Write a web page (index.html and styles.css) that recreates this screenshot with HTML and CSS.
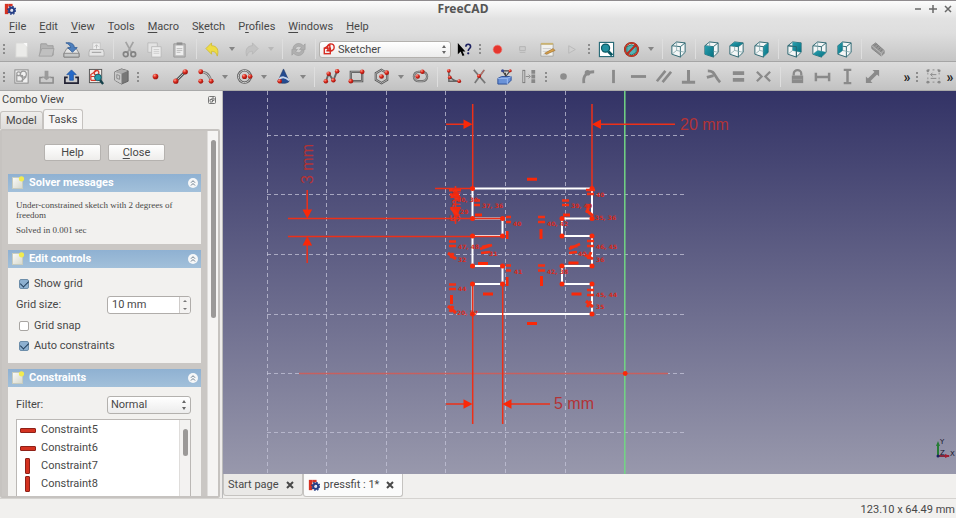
FILE: index.html
```html
<!DOCTYPE html>
<html lang="en">
<head>
<meta charset="utf-8">
<title>FreeCAD</title>
<link rel="stylesheet" href="styles.css">
</head>
<body>
<svg class="defs" aria-hidden="true">
  <defs>
    <radialGradient id="ball" cx=".35" cy=".3" r=".8"><stop offset="0" stop-color="#ff9a88"/><stop offset=".45" stop-color="#d8281c"/><stop offset="1" stop-color="#8a0c08"/></radialGradient>
    <linearGradient id="paper" x1="0" y1="0" x2="1" y2="1"><stop offset="0" stop-color="#fafaf8"/><stop offset="1" stop-color="#d6d8cc"/></linearGradient>
    <linearGradient id="teal" x1="0" y1="0" x2="1" y2="1"><stop offset="0" stop-color="#2aa0b0"/><stop offset="1" stop-color="#067080"/></linearGradient>
    <symbol id="app" viewBox="0 0 14 14"><g fill="#d63222"><rect x="1" y="1" width="4" height="12"/><rect x="5" y="1" width="5" height="3"/><rect x="5" y="6" width="3" height="3"/></g><circle cx="9" cy="8.500" r="3" fill="none" stroke="#263f86" stroke-width="2.400"/><circle cx="9" cy="8.500" r="4.600" fill="none" stroke="#263f86" stroke-width="1.600" stroke-dasharray="1.800 1.810"/><circle cx="9" cy="8.500" r="1.500" fill="#dfe6f4"/></symbol>
    <symbol id="new" viewBox="0 0 18 18"><rect x="3" y="2" width="12" height="15" fill="#ebebe9" stroke="#d6d6d4"/><path d="M11 2h4v4z" fill="#fafafa"/></symbol>
    <symbol id="open" viewBox="0 0 18 18"><path d="M3 3h6l1 2h6v10H2z" fill="#b4b4b4" stroke="#9c9c9c"/><path d="M4 8h13l-2 8H1z" fill="#c0c0c0" stroke="#a2a2a2"/></symbol>
    <symbol id="save" viewBox="0 0 18 18"><path d="M4 8h10l3 5v4H1v-4z" fill="#e4e4e4" stroke="#8b8b8b"/><path d="M1 13h16v4H1z" fill="#c6c8c8" stroke="#858585"/><path d="M3 2c5-1 9 1 9 5h3l-5 5-5-5h3c0-2-2-4-5-5z" fill="#4d7fbd" stroke="#29558f" stroke-width=".8"/></symbol>
    <symbol id="print" viewBox="0 0 18 18"><path d="M5 2h8v7H5z" fill="#eee" stroke="#c3c3c3"/><path d="M2 9h14l1 3v4H1v-4z" fill="#e4e4e4" stroke="#b0b0b0"/><path d="M9 4v4M7 6l2-2 2 2" stroke="#bbb" fill="none"/><path d="M4 12h10" stroke="#999"/></symbol>
    <symbol id="cut" viewBox="0 0 18 18"><path d="M5 1l6 11M13 1L7 12" stroke="#a2a2a2" stroke-width="1.800"/><circle cx="5" cy="14" r="2.500" fill="none" stroke="#838383" stroke-width="1.800"/><circle cx="13" cy="14" r="2.500" fill="none" stroke="#838383" stroke-width="1.800"/></symbol>
    <symbol id="copy" viewBox="0 0 18 18"><path d="M2 2h10v10H2z" fill="#e3e3e3" stroke="#bbb"/><path d="M6 6h10v11H6z" fill="#ededed" stroke="#bbb"/><path d="M8 9h6M8 11h6M8 13h6" stroke="#ccc"/></symbol>
    <symbol id="paste" viewBox="0 0 18 18"><path d="M3 3h12v14H3z" fill="#bdbdbd" stroke="#999"/><path d="M5 5h8v10H5z" fill="#eee"/><path d="M6 1.500h6V4H6z" fill="#8d8d8d"/><path d="M6 8h6M6 10h6M6 12h4" stroke="#bbb"/></symbol>
    <symbol id="undo" viewBox="0 0 18 18"><path d="M2 8l6-6v3c6 0 8 5 6 11-1-4-3-5-6-5v3z" fill="#eedc45" stroke="#cdb72c" stroke-width=".8"/></symbol>
    <symbol id="redo" viewBox="0 0 18 18"><path d="M16 8l-6-6v3c-6 0-8 5-6 11 1-4 3-5 6-5v3z" fill="#c3c3c3" stroke="#b4b4b4" stroke-width=".8"/></symbol>
    <symbol id="refresh" viewBox="0 0 18 18"><path d="M3 8c1-6 8-7 11-3l2-2v6h-6l2-2c-2-2-5-2-6 1z" fill="#b0b0b0" stroke="#989898" stroke-width=".6"/><path d="M15 10c-1 6-8 7-11 3l-2 2V9h6l-2 2c2 2 5 2 6-1z" fill="#b0b0b0" stroke="#989898" stroke-width=".6"/></symbol>
    <symbol id="sketcher" viewBox="0 0 14 14"><g fill="none" stroke="#d62a20" stroke-width="1.600"><rect x="1.500" y="6" width="7" height="6.500"/><circle cx="9" cy="5" r="4"/><path d="M2 6l6-4v7M4 9h7"/></g></symbol>
    <symbol id="help" viewBox="0 0 18 18"><path d="M3 2v12l3-3 2 5 2-1-2-4h3z" fill="#000"/><path d="M11.500 6c0-3.500 5-3.500 5 0 0 2-2.500 2-2.500 4.500" stroke="#1d2160" stroke-width="1.700" fill="none"/><circle cx="14" cy="13" r="1.200" fill="#1d2160"/></symbol>
    <symbol id="record" viewBox="0 0 18 18"><circle cx="9" cy="9" r="4.600" fill="#e6362e" stroke="#ef7770" stroke-width=".7"/></symbol>
    <symbol id="stop" viewBox="0 0 18 18"><path d="M6 6h6v4H6z" fill="#ccc" stroke="#b4b4b4"/><path d="M6 12h6" stroke="#b4b4b4"/></symbol>
    <symbol id="macro" viewBox="0 0 18 18"><path d="M2 3h13v13H2z" fill="#f1f1ee" stroke="#a8a8a4"/><path d="M2 2h13v2H2z" fill="#c9b272"/><path d="M4 8h9M4 11h8M4 14h6" stroke="#ccc"/><path d="M6 13l9-5 2 2-9 4z" fill="#d8a14a" stroke="#916326" stroke-width=".6"/></symbol>
    <symbol id="play" viewBox="0 0 18 18"><path d="M5 5l7 4-7 4z" fill="#d0d0d0" stroke="#b9b9b9"/></symbol>
    <symbol id="fit" viewBox="0 0 18 18"><rect x="1.500" y="1.500" width="15" height="15" fill="#fff" stroke="#286a77" stroke-width="1.200"/><path d="M11 11l4 4" stroke="#075561" stroke-width="3"/><circle cx="8" cy="7.500" r="4.300" fill="#23909f" stroke="#0b5965" stroke-width="1.300"/></symbol>
    <symbol id="nodraw" viewBox="0 0 18 18"><path d="M4 6l5-2 5 2v6l-5 3-5-3z" fill="#52b4b9" stroke="#276"/><circle cx="9" cy="9" r="7" fill="none" stroke="#8d2115" stroke-width="2"/><circle cx="9" cy="9" r="7" fill="none" stroke="#dc452e"/><path d="M4 14L14 4" stroke="#ba2b1d" stroke-width="2"/></symbol>
    <symbol id="cube" viewBox="0 0 18 18"><path d="M2 4.500L7 1l9 1v9l-4 6-10-3z" fill="#f4f7f7"/><path d="M2 5l9 1v11l-9-3zM2 5l5-4 9 1-5 4M16 2v10l-5 5" fill="none" stroke="#2a6570"/><path d="M7 1v9l-5 4M7 10l9 2" fill="none" stroke="#7fa3a9" stroke-width=".8"/></symbol>
    <symbol id="front" viewBox="0 0 18 18"><use href="#cube"/><path d="M2 5l9 1v11l-9-3z" fill="url(#teal)"/></symbol>
    <symbol id="top" viewBox="0 0 18 18"><use href="#cube"/><path d="M2 5l5-4 9 1-5 4z" fill="url(#teal)"/></symbol>
    <symbol id="right" viewBox="0 0 18 18"><use href="#cube"/><path d="M11 6l5-4v10l-5 5z" fill="url(#teal)"/></symbol>
    <symbol id="rear" viewBox="0 0 18 18"><use href="#cube"/><path d="M7 1l9 1v10l-9-2z" fill="url(#teal)"/><path d="M2 5l9 1v11" fill="none" stroke="#2a6570"/></symbol>
    <symbol id="bottom" viewBox="0 0 18 18"><use href="#cube"/><path d="M2 14l5-4 9 2-5 5z" fill="url(#teal)"/></symbol>
    <symbol id="left" viewBox="0 0 18 18"><use href="#cube"/><path d="M2 5l5-4v9l-5 4z" fill="url(#teal)"/></symbol>
    <symbol id="ruler" viewBox="0 0 18 18"><path d="M3 5l4-3 9 8v3l-3 3-10-8z" fill="#959595" stroke="#777" stroke-width=".8"/><path d="M3 5l10 8 3-3M13 13v3" fill="none" stroke="#bbb"/><path d="M6 5l2-2M8 7l2-2M10 9l2-2M12 11l2-2" stroke="#777"/></symbol>
    <symbol id="sk1" viewBox="0 0 18 18"><rect x="2" y="2" width="14" height="14" fill="#f0f0f0" stroke="#888"/><g fill="none" stroke="#9a9a9a" stroke-width="1.300"><circle cx="11" cy="6.500" r="3.200"/><rect x="4" y="8" width="6" height="6"/><circle cx="6" cy="6" r="2"/><path d="M9 14l5-5"/></g></symbol>
    <symbol id="sk2" viewBox="0 0 18 18"><path d="M5 10H2v6h14v-6h-3" fill="none" stroke="#8b8b8b" stroke-width="1.600"/><path d="M7 3h4v6h3l-5 4-5-4h3z" fill="#9b9b9b"/></symbol>
    <symbol id="sk3" viewBox="0 0 18 18"><path d="M5 10H2v6h14v-6h-3" fill="none" stroke="#223" stroke-width="1.800"/><path d="M7 13V7H4l5-5 5 5h-3v6z" fill="#2469c9" stroke="#164a96" stroke-width=".7"/></symbol>
    <symbol id="sk4" viewBox="0 0 18 18"><rect x="1.500" y="1.500" width="13" height="14" fill="#f3eeea" stroke="#555"/><g fill="none" stroke="#d7392b" stroke-width="1.300"><circle cx="9" cy="5" r="2.500"/><path d="M3 13V7l6-4M3 9h5v4H3"/></g><path d="M12 12l4 5" stroke="#143f49" stroke-width="2.500"/><circle cx="10.500" cy="10" r="3.500" fill="#279baa" stroke="#185b67"/></symbol>
    <symbol id="sk5" viewBox="0 0 18 18"><path d="M2 4l7-3 7 2v11l-7 3-7-4z" fill="#777" stroke="#626262"/><path d="M2 4l7-3 7 2-7 3z" fill="#adadad"/><path d="M2 4l7 2v11l-7-4z" fill="#c9c9c9"/><path d="M4 7l3 1v4l-3-1z" fill="none" stroke="#8a8a8a"/></symbol>
    <symbol id="pt" viewBox="0 0 18 18"><circle cx="9" cy="9" r="3" fill="url(#ball)"/></symbol>
    <symbol id="line" viewBox="0 0 18 18"><path d="M4 14L14 4" stroke="#555" stroke-width="3"/><path d="M4 14L14 4" stroke="#c6c6c6"/><circle cx="4" cy="14" r="2.800" fill="url(#ball)"/><circle cx="14" cy="4" r="2.800" fill="url(#ball)"/></symbol>
    <symbol id="arc" viewBox="0 0 18 18"><path d="M3 4c7 0 11 4 12 11" fill="none" stroke="#777" stroke-width="2.600"/><path d="M3 4c7 0 11 4 12 11" fill="none" stroke="#ccc"/><circle cx="4" cy="4" r="2.600" fill="url(#ball)"/><circle cx="4" cy="14" r="2.600" fill="url(#ball)"/><circle cx="15" cy="14" r="2.600" fill="url(#ball)"/></symbol>
    <symbol id="circle" viewBox="0 0 18 18"><circle cx="9" cy="9" r="6.500" fill="none" stroke="#555" stroke-width="2.600"/><circle cx="9" cy="9" r="6.500" fill="none" stroke="#d2d2d2"/><circle cx="9" cy="9" r="2.700" fill="url(#ball)"/><circle cx="15" cy="9" r="2.500" fill="url(#ball)"/></symbol>
    <symbol id="cone" viewBox="0 0 18 18"><path d="M9 1l6 13c-2 3-10 3-12 0z" fill="#244b90" stroke="#183465" stroke-width=".6"/><path d="M4 12c3-3 7-3 11 1" fill="none" stroke="#c8d5eb" stroke-width="2"/><circle cx="5" cy="14" r="2.400" fill="url(#ball)"/></symbol>
    <symbol id="poly" viewBox="0 0 18 18"><path d="M3 14l3-8 5 7 4-10" fill="none" stroke="#666" stroke-width="2"/><g fill="url(#ball)"><circle cx="3" cy="14" r="2.400"/><circle cx="6" cy="6" r="2.400"/><circle cx="11" cy="13" r="2.400"/><circle cx="15" cy="3.500" r="2.400"/></g></symbol>
    <symbol id="rect" viewBox="0 0 18 18"><path d="M3 4h12v10H3z" fill="none" stroke="#555" stroke-width="2.400"/><path d="M3 4h12v10H3z" fill="none" stroke="#bbb" stroke-width=".7"/><circle cx="3" cy="14" r="2.500" fill="url(#ball)"/><circle cx="15" cy="4" r="2.500" fill="url(#ball)"/></symbol>
    <symbol id="hex" viewBox="0 0 18 18"><path d="M9 2l6 3.500v7L9 16l-6-3.500v-7z" fill="none" stroke="#555" stroke-width="2.400"/><path d="M9 2l6 3.500v7L9 16l-6-3.500v-7z" fill="none" stroke="#ccc" stroke-width=".8"/><circle cx="9" cy="9" r="2.500" fill="url(#ball)"/><circle cx="14.500" cy="5" r="2.500" fill="url(#ball)"/></symbol>
    <symbol id="slot" viewBox="0 0 18 18"><rect x="2" y="4" width="14" height="10" rx="5" fill="none" stroke="#666" stroke-width="2.400"/><rect x="2" y="4" width="14" height="10" rx="5" fill="none" stroke="#ccc" stroke-width=".7"/><circle cx="6" cy="9" r="2.400" fill="url(#ball)"/><circle cx="11" cy="4" r="2.400" fill="url(#ball)"/></symbol>
    <symbol id="fillet" viewBox="0 0 18 18"><path d="M3 3v11h12M3 7c2 4 4 6 9 7" fill="none" stroke="#666" stroke-width="1.500"/><circle cx="3" cy="3" r="2" fill="url(#ball)"/><circle cx="4" cy="10" r="2" fill="url(#ball)"/><circle cx="14" cy="14" r="2" fill="url(#ball)"/></symbol>
    <symbol id="trim" viewBox="0 0 18 18"><path d="M3 2l12 14M14 2L4 16" stroke="#777" stroke-width="1.800"/><path d="M9 9l5-7" stroke="#d36658"/><circle cx="8.500" cy="8.500" r="2.200" fill="url(#ball)"/></symbol>
    <symbol id="external" viewBox="0 0 18 18"><path d="M2 11l4-2h10v4l-4 4H2z" fill="#6a92d8" stroke="#294d96"/><path d="M2 11h10l4-2M12 11v6" fill="none" stroke="#9dbcf0"/><path d="M6 3h10M7 3l3 5 1 0 4-5M10 5v4" stroke="#444" fill="none" stroke-width="1.200"/><circle cx="7" cy="3" r="1.600" fill="#37488f"/><circle cx="15" cy="3" r="1.600" fill="url(#ball)"/></symbol>
    <symbol id="carbon" viewBox="0 0 18 18"><path d="M3 2v14" stroke="#777" stroke-width="3"/><path d="M3 3v12" stroke="#eee"/><path d="M13 2v14" stroke="#888" stroke-width="4" stroke-dasharray="4 1"/><path d="M5 9h4M8 7l2 2-2 2" stroke="#888" fill="none"/></symbol>
    <symbol id="c1" viewBox="0 0 18 18"><circle cx="9" cy="9" r="3.500" fill="#8d8d8d"/></symbol>
    <symbol id="c2" viewBox="0 0 18 18"><path d="M4 16c-1-8 3-12 11-12" fill="none" stroke="#8b8b8b" stroke-width="3"/><circle cx="8" cy="5" r="3" fill="#8b8b8b"/></symbol>
    <symbol id="c3" viewBox="0 0 18 18"><path d="M9 2v14" stroke="#8a8a8a" stroke-width="3"/></symbol>
    <symbol id="c4" viewBox="0 0 18 18"><path d="M1 9h16" stroke="#8a8a8a" stroke-width="3"/></symbol>
    <symbol id="c5" viewBox="0 0 18 18"><path d="M2 14L11 3M8 15l9-11" stroke="#8a8a8a" stroke-width="2.800"/></symbol>
    <symbol id="c6" viewBox="0 0 18 18"><path d="M9 2v12M2 15h14" stroke="#8a8a8a" stroke-width="3.200"/></symbol>
    <symbol id="c7" viewBox="0 0 18 18"><path d="M3 3c8 0 6 5 13 12M9 8L2 10" fill="none" stroke="#8a8a8a" stroke-width="3"/></symbol>
    <symbol id="c8" viewBox="0 0 18 18"><path d="M3 5.500h12M3 12.500h12" stroke="#8a8a8a" stroke-width="4"/></symbol>
    <symbol id="c9" viewBox="0 0 18 18"><path d="M2 4l5 5-5 5M16 4l-5 5 5 5" fill="none" stroke="#8a8a8a" stroke-width="2.400"/></symbol>
    <symbol id="lock" viewBox="0 0 18 18"><path d="M5 8V6c0-5 8-5 8 0v2" fill="none" stroke="#8a8a8a" stroke-width="2.400"/><rect x="3" y="8" width="12" height="8" fill="#8a8a8a"/><path d="M4 12h10" stroke="#9c9c9c"/></symbol>
    <symbol id="hd" viewBox="0 0 18 18"><path d="M2 5v9M16 5v9M2 9.500h14" stroke="#8a8a8a" stroke-width="2.600"/></symbol>
    <symbol id="vd" viewBox="0 0 18 18"><path d="M5 2h8M5 16h8M9 2v14" stroke="#8a8a8a" stroke-width="2.600"/></symbol>
    <symbol id="dd" viewBox="0 0 18 18"><path d="M5 13l8-8" stroke="#8a8a8a" stroke-width="4"/><path d="M9 2h7v7zM2 9v7h7z" fill="#8a8a8a"/></symbol>
    <symbol id="sel" viewBox="0 0 18 18"><path d="M3 2h12v13H3z" fill="none" stroke="#999" stroke-width="1.200" stroke-dasharray="2 3"/><path d="M6 7h6M8 5L6 7l2 2M6 11h6" fill="none" stroke="#888"/><circle cx="3" cy="3" r="1.500" fill="#888"/><circle cx="15" cy="3" r="1.500" fill="#888"/><circle cx="3" cy="15" r="1.500" fill="#888"/><circle cx="15" cy="15" r="1.500" fill="#888"/></symbol>
    <symbol id="doc" viewBox="0 0 14 14"><rect x="1.500" y="1.500" width="10" height="11" fill="url(#paper)" stroke="#c9cdbf"/><circle cx="10.500" cy="2.800" r="2.600" fill="#f1eb50"/></symbol>
    <symbol id="fold" viewBox="0 0 10 10"><circle cx="5" cy="5" r="5" fill="#f6f7f8"/><path d="M3 4.700l2-2 2 2M3 7.500l2-2 2 2" fill="none" stroke="#6b7c8c"/></symbol>
    <symbol id="x" viewBox="0 0 8 8"><path d="M1 1l6 6M7 1L1 7" stroke="#484848" stroke-width="2"/></symbol>
  </defs>
</svg>

<header class="top">
  <div class="titlebar">
    <svg class="appicon"><use href="#app"/></svg>
    <h1>FreeCAD</h1>
    <div class="winbtns">
      <button aria-label="Minimize"><svg viewBox="0 0 8 8"><path d="M1 4h6" /></svg></button>
      <button aria-label="Maximize"><svg viewBox="0 0 8 8"><path d="M0 4h8M4 0v8"/></svg></button>
      <button aria-label="Close window"><svg viewBox="0 0 8 8"><path d="M1 1l6 6M7 1L1 7"/></svg></button>
    </div>
  </div>
  <nav class="menu">
    <a href="#"><u>F</u>ile</a><a href="#"><u>E</u>dit</a><a href="#"><u>V</u>iew</a><a href="#"><u>T</u>ools</a><a href="#"><u>M</u>acro</a><a href="#">S<u>k</u>etch</a><a href="#">P<u>r</u>ofiles</a><a href="#"><u>W</u>indows</a><a href="#"><u>H</u>elp</a>
  </nav>
  <div class="bar">
    <i class="grip"></i>
    <button aria-label="New"><svg><use href="#new"/></svg></button>
    <button aria-label="Open"><svg><use href="#open"/></svg></button>
    <button aria-label="Save"><svg><use href="#save"/></svg></button>
    <button aria-label="Print"><svg><use href="#print"/></svg></button>
    <i class="sep"></i>
    <button aria-label="Cut"><svg><use href="#cut"/></svg></button>
    <button aria-label="Copy"><svg><use href="#copy"/></svg></button>
    <button aria-label="Paste"><svg><use href="#paste"/></svg></button>
    <i class="sep"></i>
    <button aria-label="Undo"><svg><use href="#undo"/></svg></button>
    <button class="drop" aria-label="Undo list"></button>
    <button aria-label="Redo"><svg><use href="#redo"/></svg></button>
    <button class="drop off" aria-label="Redo list"></button>
    <i class="sep"></i>
    <button aria-label="Refresh"><svg><use href="#refresh"/></svg></button>
    <i class="sep"></i>
    <div class="combo workbench"><svg><use href="#sketcher"/></svg><select aria-label="Workbench"><option>Sketcher</option></select></div>
    <button aria-label="What's this"><svg><use href="#help"/></svg></button>
    <i class="grip"></i>
    <button aria-label="Record macro"><svg><use href="#record"/></svg></button>
    <button aria-label="Stop macro"><svg><use href="#stop"/></svg></button>
    <button aria-label="Macros"><svg><use href="#macro"/></svg></button>
    <button aria-label="Run macro"><svg><use href="#play"/></svg></button>
    <i class="grip"></i>
    <button aria-label="Fit all"><svg><use href="#fit"/></svg></button>
    <button aria-label="Draw style"><svg><use href="#nodraw"/></svg></button>
    <button class="drop" aria-label="Draw styles"></button>
    <i class="sep"></i>
    <button aria-label="Axonometric"><svg><use href="#cube"/></svg></button>
    <i class="sep"></i>
    <button aria-label="Front"><svg><use href="#front"/></svg></button>
    <button aria-label="Top"><svg><use href="#top"/></svg></button>
    <button aria-label="Right"><svg><use href="#right"/></svg></button>
    <i class="sep"></i>
    <button aria-label="Rear"><svg><use href="#rear"/></svg></button>
    <button aria-label="Bottom"><svg><use href="#bottom"/></svg></button>
    <button aria-label="Left"><svg><use href="#left"/></svg></button>
    <i class="sep"></i>
    <button aria-label="Measure"><svg><use href="#ruler"/></svg></button>
  </div>
</header>
<div class="bar second">
  <i class="grip"></i>
  <button aria-label="New sketch"><svg><use href="#sk1"/></svg></button>
  <button aria-label="Edit sketch"><svg><use href="#sk2"/></svg></button>
  <button aria-label="Leave sketch"><svg><use href="#sk3"/></svg></button>
  <button aria-label="View sketch"><svg><use href="#sk4"/></svg></button>
  <button aria-label="Map sketch"><svg><use href="#sk5"/></svg></button>
  <i class="grip"></i>
  <button aria-label="Point"><svg><use href="#pt"/></svg></button>
  <button aria-label="Line"><svg><use href="#line"/></svg></button>
  <button aria-label="Arc"><svg><use href="#arc"/></svg></button>
  <button class="drop" aria-label="Arcs"></button>
  <button aria-label="Circle"><svg><use href="#circle"/></svg></button>
  <button class="drop" aria-label="Circles"></button>
  <button aria-label="Conic"><svg><use href="#cone"/></svg></button>
  <button class="drop" aria-label="Conics"></button>
  <i class="sep"></i>
  <button aria-label="Polyline"><svg><use href="#poly"/></svg></button>
  <button aria-label="Rectangle"><svg><use href="#rect"/></svg></button>
  <button aria-label="Polygon"><svg><use href="#hex"/></svg></button>
  <button class="drop" aria-label="Polygons"></button>
  <button aria-label="Slot"><svg><use href="#slot"/></svg></button>
  <i class="sep"></i>
  <button aria-label="Fillet"><svg><use href="#fillet"/></svg></button>
  <button aria-label="Trim"><svg><use href="#trim"/></svg></button>
  <button aria-label="External geometry"><svg><use href="#external"/></svg></button>
  <button aria-label="Construction mode"><svg><use href="#carbon"/></svg></button>
  <i class="grip"></i>
  <button aria-label="Coincident"><svg><use href="#c1"/></svg></button>
  <button aria-label="Point on object"><svg><use href="#c2"/></svg></button>
  <button aria-label="Vertical"><svg><use href="#c3"/></svg></button>
  <button aria-label="Horizontal"><svg><use href="#c4"/></svg></button>
  <button aria-label="Parallel"><svg><use href="#c5"/></svg></button>
  <button aria-label="Perpendicular"><svg><use href="#c6"/></svg></button>
  <button aria-label="Tangent"><svg><use href="#c7"/></svg></button>
  <button aria-label="Equal"><svg><use href="#c8"/></svg></button>
  <button aria-label="Symmetric"><svg><use href="#c9"/></svg></button>
  <i class="sep"></i>
  <button aria-label="Lock"><svg><use href="#lock"/></svg></button>
  <button aria-label="Horizontal distance"><svg><use href="#hd"/></svg></button>
  <button aria-label="Vertical distance"><svg><use href="#vd"/></svg></button>
  <button aria-label="Distance"><svg><use href="#dd"/></svg></button>
  <span class="tail"><button class="more" aria-label="More constraints">»</button><i class="grip"></i><button class="narrow" aria-label="Select"><svg><use href="#sel"/></svg></button><button class="more" aria-label="More tools">»</button></span>
</div>

<main>
  <aside>
    <div class="dockhead"><span>Combo View</span><button aria-label="Float panel"><svg viewBox="0 0 8 8"><rect x=".5" y=".5" width="7" height="7" rx="1"/><path d="M2 5.500V3.500h2.500v2.500H2M4 3V2h2v2.500H5"/></svg></button></div>
    <div class="tabs" role="tablist"><button role="tab">Model</button><button role="tab" class="on">Tasks</button></div>
    <div class="tasks">
      <div class="content">
        <div class="actions"><button>Help</button><button><u>C</u>lose</button></div>
        <section>
          <h2><svg class="doc"><use href="#doc"/></svg>Solver messages<svg class="fold"><use href="#fold"/></svg></h2>
          <div class="messages"><p>Under-constrained sketch with 2 degrees of freedom</p><p>Solved in 0.001 sec</p></div>
        </section>
        <section>
          <h2><svg class="doc"><use href="#doc"/></svg>Edit controls<svg class="fold"><use href="#fold"/></svg></h2>
          <div class="controls">
            <label class="check"><input type="checkbox" checked>Show grid</label>
            <div class="row"><label for="gs">Grid size:</label><div class="spin"><input id="gs" type="text" value="10 mm"><span class="steps"><button aria-label="Increase"></button><button aria-label="Decrease"></button></span></div></div>
            <label class="check"><input type="checkbox">Grid snap</label>
            <label class="check"><input type="checkbox" checked>Auto constraints</label>
          </div>
        </section>
        <section>
          <h2><svg class="doc"><use href="#doc"/></svg>Constraints<svg class="fold"><use href="#fold"/></svg></h2>
          <div class="constraints">
            <div class="row"><label for="filter">Filter:</label><div class="combo filter"><select id="filter"><option>Normal</option></select></div></div>
            <div class="listbox">
              <ul><li><i class="h"></i>Constraint5</li><li><i class="h"></i>Constraint6</li><li><i class="v"></i>Constraint7</li><li><i class="v"></i>Constraint8</li></ul>
              <div class="track"><i></i></div>
            </div>
          </div>
        </section>
      </div>
      <div class="track outer"><i></i></div>
    </div>
  </aside>
  <div class="split"></div>
  <div class="work">
    <div class="view">
      <svg class="scene" role="img" aria-label="Sketch">
        <g transform="translate(-223 -91)">
          <g stroke="#c4c4d8" stroke-opacity=".75" stroke-dasharray="4 3" fill="none">
            <path d="M267.500 91v384M326.500 91v384M386.500 91v384M445.500 91v384M505.500 91v384M565.500 91v384"/>
            <path d="M267 135.500h417M267 194.500h417M267 254.500h417M267 314.500h417M267 373.500h417M267 432.500h417"/>
          </g>
          <path d="M299 373.500h369" stroke="#c6605f" stroke-width="1.500"/>
          <path d="M624.800 91v384" stroke="#72d584" stroke-width="1.500"/>
          <path d="M472.500 188.500H592V218.500H562V236H592V266H562V284H592V314H472.500V284H502.500V266H472.500V236H502.500V218.500H472.500Z" fill="none" stroke="#fff" stroke-width="2"/>
          <g stroke="#ed3018" stroke-width="1.500" fill="none">
            <path d="M472.700 104v84M592 104v84M472.700 284v140M502.700 284v140M288 218.500h217M288 236.500h214M435 188.500h38"/>
            <path d="M446 124.300h20M598 124.300h77M446 404h20M509 404h41M307.200 190v20M307.200 243v20M455.500 186v38"/>
          </g>
          <g fill="#fa2808">
            <path d="M463.500 119.500v9.600l9-4.800zM601 119.500v9.600l-9-4.800zM463.500 399.200v9.600l9-4.800zM511.500 399.200v9.600l-9-4.800zM302.500 209.500h9.600l-4.800 9zM302.500 245.500h9.600l-4.800-9zM450 207h11l-5 12zM450 198h11l-5-9z"/>
            <path d="M527 177.700h10v3h-10zM527 321.900h10v3h-10zM483 292.500h10v3h-10zM571.500 292.500h10v3h-10zM478 262h10v3h-10zM568.500 261.500h10v3h-10zM475 213.500h7v3h-7zM563 213.500h7v3h-7zM506 231h2.500v8h-2.500zM539.500 229h3v10h-3zM506 277h2.500v9h-2.500zM540 276h3v10h-3zM450 295h3v9h-3z"/>
            <circle cx="472.500" cy="188.500" r="2.500"/><circle cx="592" cy="188.500" r="2.500"/><circle cx="472.500" cy="218.500" r="2.500"/><circle cx="502.500" cy="218.500" r="2.500"/><circle cx="562" cy="218.500" r="2.500"/><circle cx="592" cy="218.500" r="2.500"/><circle cx="472.500" cy="236" r="2.500"/><circle cx="502.500" cy="236" r="2.500"/><circle cx="562" cy="236" r="2.500"/><circle cx="592" cy="236" r="2.500"/><circle cx="472.500" cy="266" r="2.500"/><circle cx="502.500" cy="266" r="2.500"/><circle cx="562" cy="266" r="2.500"/><circle cx="592" cy="266" r="2.500"/><circle cx="472.500" cy="284" r="2.500"/><circle cx="502.500" cy="284" r="2.500"/><circle cx="562" cy="284" r="2.500"/><circle cx="592" cy="284" r="2.500"/><circle cx="472.500" cy="314" r="2.500"/><circle cx="592" cy="314" r="2.500"/><circle cx="625.200" cy="373.500" r="2.400"/>
          </g>
          <g stroke="#f52f12" stroke-width="2.300" fill="none">
            <path d="M474 200.500h6M474 205h6M562 200.500h7M562 205h7M586 190h9M587 194h7M506 217h5M506 222h5M538 217h7M538 222h7M449 241.500h7M449 246h7M587 241h7M587 246h7M506 265.500h5M506 270.500h5M538 265.500h7M538 270.500h7M449 284.500h7M449 289h7M587 290h7M587 295h7"/>
            <path d="M480 249l12-4M481 253l9-1M569 249l11-5M569 253l8-1M570 247l8-1M482 247l8-2" stroke-width="2.600"/>
            <path d="M448 253l8 6M451 258l2-5M448 306l8 7M450 312l3-6M586 210l7 6M589 204l-2 9M585 255l8 4M588 259l3-7M586 301l7 6M587 307l4-6M449 190l12 0M450 194l10 6M451 208l8 8" stroke-width="3"/>
          </g>
          <g class="tags">
            <text x="457" y="202">30, 30</text><text x="460" y="214">29</text><text x="482" y="208">37, 36</text><text x="571" y="208">39, 40</text><text x="596" y="197">40</text><text x="595" y="220">35, 36</text><text x="513" y="226">40</text><text x="547" y="226">40, 42</text><text x="458" y="249">47, 48</text><text x="458" y="262">32</text><text x="489" y="256">31</text><text x="578" y="256">40</text><text x="596" y="249">46, 45</text><text x="596" y="262">36</text><text x="514" y="274">41</text><text x="547" y="274">42, 38</text><text x="458" y="291">44</text><text x="457" y="315">20, 27</text><text x="596" y="297">45, 44</text><text x="596" y="309">35</text>
          </g>
          <g class="dims">
            <text x="680" y="130">20 mm</text><text x="554" y="409">5 mm</text>
            <text transform="translate(313 184) rotate(-90)">3 mm</text><text class="small" transform="translate(460 222) rotate(-90)">5 mm</text>
          </g>
        </g>
      </svg>
      <svg class="axes" viewBox="0 0 22 26"><path d="M4 20V8" stroke="#267c35" stroke-width="2"/><path d="M4 5l-2 5h4z" fill="#267c35"/><path d="M4 20h11" stroke="#85273e" stroke-width="2"/><path d="M16 20l-5-2v4z" fill="#a51e30"/><circle cx="4" cy="20" r="1.500" fill="#182062"/><text x="6" y="8">Y</text><text x="6" y="19">Z</text><text x="16" y="20">X</text></svg>
    </div>
    <div class="docs">
      <div class="doctab">Start page<button aria-label="Close Start page"><svg><use href="#x"/></svg></button></div>
      <div class="doctab on"><svg class="appicon"><use href="#app"/></svg>pressfit : 1*<button aria-label="Close pressfit"><svg><use href="#x"/></svg></button></div>
    </div>
  </div>
</main>
<footer>123.10 x 64.49 mm</footer>
</body>
</html>
```

FILE: styles.css
```css
* { box-sizing: border-box; }

body {
  margin: 0;
  height: 100vh;
  display: flex;
  flex-direction: column;
  overflow: hidden;
  background: #f1f0ee;
  color: #484848;
  font: 11px/16px Roboto, "Noto Sans", sans-serif;
}

button, input, select { font: inherit; color: inherit; margin: 0; }
button { padding: 0; border: 0; background: none; }
a { color: inherit; text-decoration: none; }
u { text-underline-offset: 2px; }
.defs { position: absolute; width: 0; height: 0; }

.top {
  flex: none;
  border-top: 1px solid #8f8b8e;
  border-bottom: 1px solid #a5a5a5;
  background: linear-gradient(#fcfcfc, #e2e2e2 18px, #dedede 32px, #c5c5c5);
}

.titlebar { display: grid; grid-template-columns: 1fr auto 1fr; align-items: center; height: 16px; padding: 0 4px; }
.titlebar h1 { margin: 0; padding-right: 30px; font: 700 12px/16px "Noto Sans", sans-serif; color: #555; }
.titlebar .appicon, .doctab .appicon { width: 12px; height: 12px; }
.winbtns { display: flex; gap: 7px; justify-content: flex-end; }
.winbtns button { width: 8px; height: 16px; display: grid; place-items: center; }
.winbtns svg { width: 8px; height: 8px; fill: none; stroke: #686868; stroke-width: 1.5; }

.menu { display: flex; gap: 13px; height: 20px; padding: 2px 9px 0; }

.bar { display: flex; align-items: center; height: 24px; overflow: hidden; }
.bar > *, .tail > * { flex: none; }
.bar button { width: 25px; height: 24px; display: grid; place-items: center; }
.bar button svg { width: 17px; height: 17px; }
.bar .drop { width: 14px; }
.bar .drop::after { content: ""; border: 3px solid transparent; border-top: 4px solid #858585; border-bottom: 0; }
.bar .drop.off::after { border-top-color: #b8b8b8; }
.sep { width: 8px; height: 20px; background: linear-gradient(90deg, transparent 4px, #dedede 4px 5px, transparent 5px); }
.grip { width: 9px; height: 12px; background: radial-gradient(circle at 4px 2px, #8c8c8c 1px, transparent 1px) 0 0 / 9px 4px; }
.second { flex: none; height: 29px; padding-top: 1px; background: linear-gradient(#dcdcdc, #c2c2c2); border-bottom: 1px solid #a9a9a9; }
.second .sep { width: 9px; }
.tail { display: flex; align-items: center; margin-left: auto; }
.bar .narrow { width: 22px; }
.bar .more { width: 12px; font-size: 14px; font-weight: 700; color: #222; }

.combo { position: relative; border: 1px solid #b3b1ae; border-radius: 3px; background: linear-gradient(#fff, #ececec); }
.combo select { appearance: none; width: 100%; height: 100%; padding: 0 0 0 3px; border: 0; background: none; }
.combo::before, .combo::after { content: ""; position: absolute; right: 4px; border: 2px solid transparent; pointer-events: none; }
.combo::before { top: 3px; border-bottom: 3px solid #666; border-top: 0; }
.combo::after { bottom: 3px; border-top: 3px solid #666; border-bottom: 0; }
.workbench { width: 132px; height: 17px; display: flex; align-items: center; padding-left: 3px; }
.workbench svg { flex: none; width: 12px; height: 12px; }

main { flex: 1; min-height: 0; display: flex; }
aside { width: 220px; flex: none; display: flex; flex-direction: column; }
.dockhead { display: flex; align-items: center; justify-content: space-between; height: 18px; padding: 0 4px 0 2px; }
.dockhead button, .dockhead svg { display: block; width: 8px; height: 8px; fill: none; stroke: #777; }
.tabs { display: flex; align-items: flex-end; height: 20px; }
.tabs button { height: 18px; padding: 0 5px; border: 1px solid #c5c2bf; border-bottom: 0; border-radius: 3px 3px 0 0; background: linear-gradient(#eeedeb, #dddbd9); }
.tabs .on { height: 20px; background: #f7f6f5; }

.tasks { flex: 1; min-height: 0; display: flex; border: 2px solid #c6c3c0; border-radius: 2px; overflow: hidden; }
.content { flex: 1; min-width: 0; padding: 13px 6px 0; background: #cac7c4; overflow: hidden; }
.actions { display: flex; gap: 7px; justify-content: center; margin-bottom: 13px; }
.actions button { width: 57px; height: 17px; border: 1px solid #b5b2af; border-radius: 2px; background: linear-gradient(#fff, #eeedeb); }
section { margin-bottom: 6px; background: #f2f1ef; }
h2 { display: flex; align-items: center; gap: 4px; height: 18px; margin: 0; padding: 0 3px 0 3px; background: linear-gradient(#8fb1d2, #a2c0da); color: #fff; font-size: 11px; font-weight: 700; }
.doc { width: 14px; height: 14px; }
.fold { width: 10px; height: 10px; margin-left: auto; }
.messages { padding: 8px 8px 9px; font: 9px/10px "Liberation Serif", serif; }
.messages p { margin: 0 0 5px; }
.messages p:last-child { margin: 0; }
.controls { display: flex; flex-direction: column; gap: 4px; padding: 8px 10px 9px 8px; }
.check { display: flex; align-items: center; gap: 5px; height: 16px; padding-left: 3px; }
.check input { appearance: none; width: 10px; height: 10px; border: 1px solid #a8a5a2; border-radius: 2px; background: #fff; }
.check input:checked { background: #8db0d0; border-color: #6d8eaa; }
.check input:checked::after { content: ""; display: block; width: 4px; height: 7px; margin: -1px 0 0 2px; border: solid #1f3c58; border-width: 0 1px 1px 0; transform: rotate(45deg); }
.row { display: flex; align-items: center; justify-content: space-between; height: 18px; }
.spin { display: flex; width: 84px; height: 18px; border: 1px solid #b0adaa; border-radius: 3px; background: #fff; overflow: hidden; }
.spin input { flex: 1; min-width: 0; padding: 0 4px; border: 0; background: none; }
.steps { display: flex; flex-direction: column; width: 11px; border-left: 1px solid #cfccca; background: #f4f3f2; }
.steps button { flex: 1; display: grid; place-items: center; }
.steps button::after { content: ""; border: 2px solid transparent; }
.steps button:first-child::after { border-bottom-color: #777; border-top: 0; }
.steps button:last-child::after { border-top-color: #777; border-bottom: 0; }
.constraints { padding: 9px 10px 0 8px; }
.filter { width: 84px; height: 18px; }
.listbox { display: flex; height: 100px; margin-top: 5px; border: 1px solid #bbb8b5; background: #fff; }
.listbox ul { flex: 1; margin: 0; padding: 1px 3px; list-style: none; }
.listbox li { display: flex; align-items: center; gap: 5px; height: 18px; }
.listbox .h { width: 16px; height: 5px; border: 1px solid #8f2118; border-radius: 1px; background: #d43220; }
.listbox .v { width: 5px; height: 16px; margin: 0 6px 0 5px; border: 1px solid #8f2118; border-radius: 1px; background: #d43220; }
.track { width: 11px; padding: 9px 3px 0; background: #f3f2f1; border-left: 1px solid #dfdddb; }
.track i { display: block; width: 5px; height: 27px; border-radius: 3px; background: #9b9998; }
.outer { height: 100%; background: #f5f4f3; }
.outer i { height: 178px; }
.split { width: 3px; flex: none; background: #eeecea; border-right: 1px solid #bbb; }

.work { flex: 1; min-width: 0; display: flex; flex-direction: column; }
.view { position: relative; flex: 1; min-height: 0; overflow: hidden; background: linear-gradient(#333366, #9898ac); }
.scene { display: block; width: 100%; height: 100%; }
.tags { font: 700 6px "DejaVu Sans", sans-serif; fill: #d92a1a; }
.dims { font: 16px "Liberation Sans", sans-serif; fill: #b33336; }
.dims .small { font-size: 14px; fill: #e52b1b; }
.axes { position: absolute; right: 0; bottom: 12px; width: 22px; height: 26px; font: 7px "DejaVu Sans", sans-serif; fill: #14142a; }
.docs { display: flex; align-items: flex-start; height: 24px; flex: none; }
.doctab { display: flex; align-items: center; height: 22px; padding: 0 8px 0 4px; border: 1px solid #c5c3c0; border-top: 0; border-radius: 0 0 3px 3px; background: #eae9e7; }
.doctab button { margin-left: 7px; display: grid; }
.doctab button svg { width: 8px; height: 8px; }
.doctab.on { height: 23px; background: #fbfbfb; }
.doctab .appicon { margin-right: 4px; }

footer { flex: none; height: 20px; border-top: 1px solid #d5d3d0; text-align: right; line-height: 22px; padding-right: 1px; }
```
